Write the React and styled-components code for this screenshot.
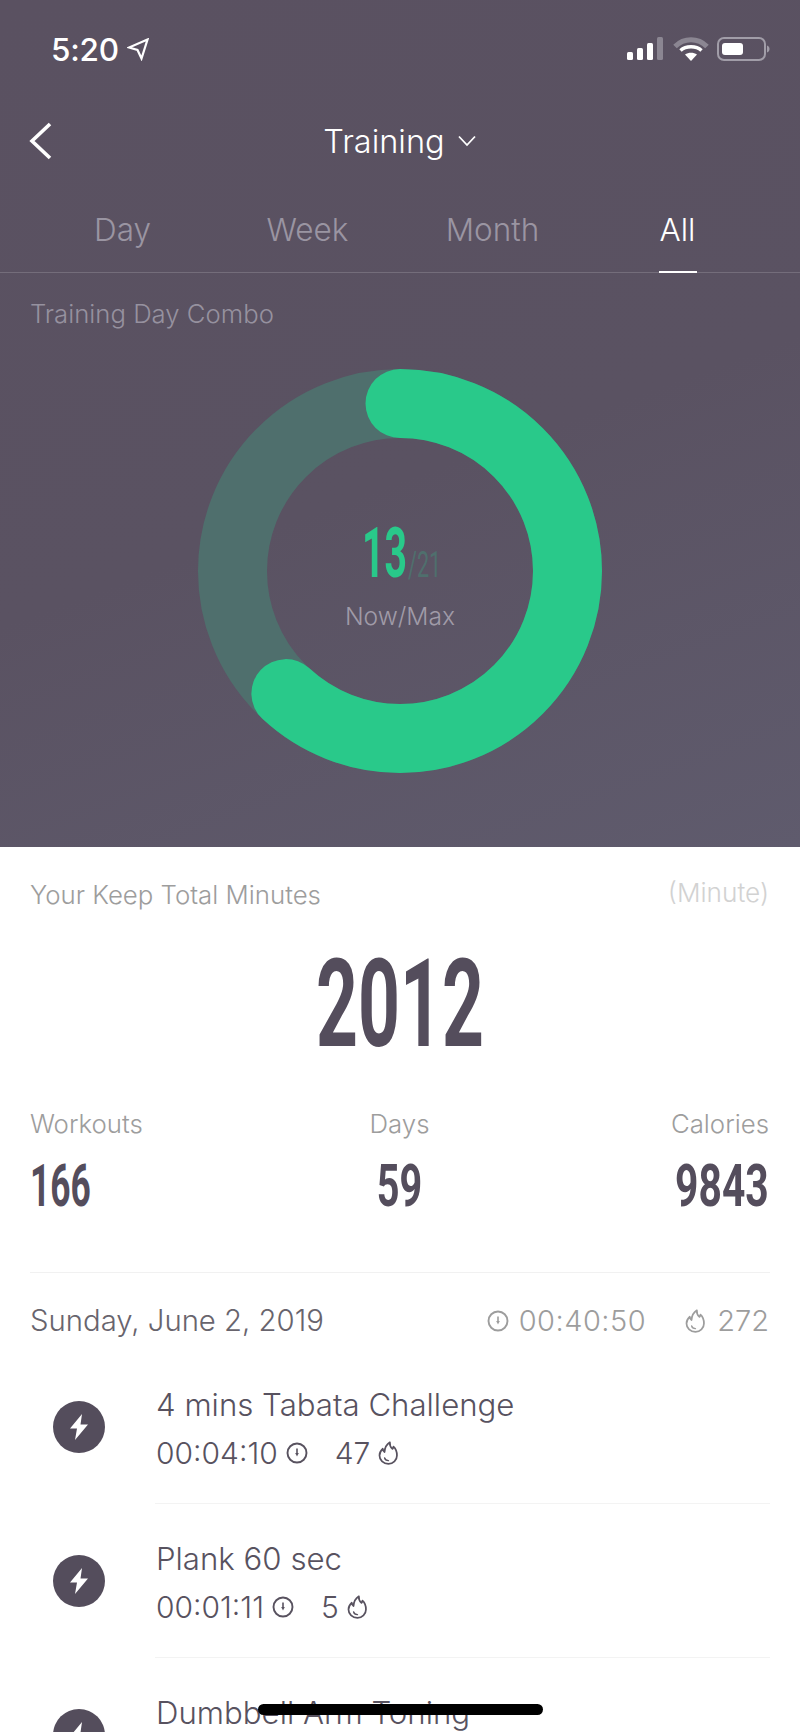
import styled, { createGlobalStyle } from "styled-components";

const GlobalStyle = createGlobalStyle`
  html, body {
    margin: 0;
    padding: 0;
    background: #fff;
  }
  * {
    box-sizing: border-box;
  }
`;

const Page = styled.div`
  position: relative;
  width: 800px;
  height: 1732px;
  overflow: hidden;
  font-family: Inter, "Liberation Sans", sans-serif;
  font-weight: 300;
  background: #fff;
`;

const Hero = styled.section`
  height: 847px;
  background: linear-gradient(160deg, #5a5161 0%, #5a5262 55%, #5f5b6d 100%);
  color: #fff;
`;

const StatusBar = styled.div`
  height: 98px;
  padding: 35px 30px 0 51px;
  display: flex;
  justify-content: space-between;
  align-items: flex-start;
`;

const StatusTime = styled.div`
  display: flex;
  align-items: center;
  gap: 8px;
  height: 28px;
  font-size: 31.5px;
  font-weight: 500;
  letter-spacing: -0.2px;
`;

const StatusIcons = styled.div`
  display: flex;
  align-items: center;
  height: 26px;
  margin-top: 2px;
`;

const TitleRow = styled.div`
  position: relative;
  height: 86px;
  display: flex;
  align-items: center;
  justify-content: center;
  gap: 13px;
  padding-right: 1px;
`;

const BackIcon = styled.svg`
  position: absolute;
  left: 29px;
  top: 24px;
`;

const Title = styled.h1`
  margin: 0;
  font-size: 32.5px;
  font-weight: 300;
`;

const Tabs = styled.nav`
  height: 89px;
  padding: 0 30px;
  display: grid;
  grid-template-columns: repeat(4, 185px);
  border-bottom: 1px solid rgba(255, 255, 255, 0.16);
`;

const Tab = styled.div`
  position: relative;
  display: flex;
  justify-content: center;
  padding-top: 27px;
  font-size: 31.5px;
  line-height: 38px;
  color: ${(props) => (props.$active ? "#fff" : "#9a95a2")};

  &::after {
    content: "";
    display: ${(props) => (props.$active ? "block" : "none")};
    position: absolute;
    left: 50%;
    bottom: -1px;
    width: 38px;
    height: 2px;
    margin-left: -19px;
    background: #fff;
  }
`;

const ComboLabel = styled.div`
  padding: 26px 0 0 30px;
  height: 96px;
  font-size: 25.7px;
  line-height: 30px;
  color: #96919f;
`;

const RingWrap = styled.div`
  position: relative;
  width: 404px;
  height: 404px;
  margin-left: 198px;
`;

const RingCenter = styled.div`
  position: absolute;
  top: 0;
  left: 0;
  right: 0;
  bottom: 0;
  display: flex;
  flex-direction: column;
  align-items: center;
  padding-top: 154px;
`;

const NowMax = styled.div`
  margin-top: 18px;
  font-size: 24.6px;
  line-height: 30px;
  color: #a09ba8;
`;

const Score = styled.div`
  display: flex;
  align-items: baseline;
  width: 76px;
  height: 60px;
`;

const Squeezed = styled.div`
  display: flex;
  justify-content: ${(props) => props.$justify || "flex-start"};
  width: ${(props) => props.$width}px;
  height: ${(props) => props.$height}px;
  line-height: ${(props) => props.$height}px;
  font-family: Roboto, "Liberation Sans", sans-serif;
  font-size: ${(props) => props.$size}px;
  font-weight: ${(props) => props.$weight || 700};
  color: ${(props) => props.$color || "#544d5c"};
  white-space: nowrap;

  span {
    display: block;
    transform: scaleX(${(props) => props.$scale});
    transform-origin: ${(props) => props.$origin || "left"} center;
  }
`;

const Summary = styled.section`
  padding: 0 30px;
`;

const SummaryHead = styled.div`
  display: flex;
  justify-content: space-between;
  align-items: flex-start;
  height: 96px;
  padding: 33px 1px 0 0;
`;

const SummaryLabel = styled.div`
  font-size: 25.8px;
  line-height: 30px;
  color: #9d9d9d;
`;

const SummaryUnit = styled.div`
  font-size: 26.2px;
  line-height: 30px;
  color: #d2d2d2;
  margin-top: -2px;
`;

const TotalRow = styled.div`
  display: flex;
  justify-content: center;
  height: 158px;
  padding-top: 7px;
`;

const Stats = styled.div`
  display: grid;
  grid-template-columns: 1fr 1fr 1fr;
  height: 172px;
  padding: 8px 1px 0 0;
  border-bottom: 1px solid #f1f1f1;
`;

const Stat = styled.div`
  display: flex;
  flex-direction: column;
  align-items: ${(props) => props.$align};
  font-size: 25.8px;
  line-height: 30px;
  color: #9d9d9d;
  gap: 22px;
`;

const DayHead = styled.div`
  display: flex;
  align-items: flex-start;
  height: 77px;
  padding: 30px 1px 0 0;
  line-height: 36px;
`;

const DayTitle = styled.div`
  flex: 1;
  font-size: 29.3px;
  color: #68646d;
`;

const DayFigure = styled.div`
  display: flex;
  align-items: center;
  gap: 10px;
  margin-left: 39px;
  font-size: 29px;
  letter-spacing: ${(props) => props.$tracking || 0}px;
  color: #9d9d9d;
`;

const Item = styled.div`
  display: flex;
  height: 154px;
`;

const Badge = styled.div`
  flex: none;
  width: 52px;
  height: 52px;
  margin: 51px 50px 0 23px;
  border-radius: 50%;
  background: #544d5c;
  display: flex;
  align-items: center;
  justify-content: center;
`;

const ItemBody = styled.div`
  flex: 1;
  padding-top: 37px;
  border-bottom: 1px solid #f3f3f3;
`;

const ItemTitle = styled.div`
  font-size: 31.2px;
  line-height: 36px;
  color: #58525f;
  margin-left: 1px;
`;

const ItemMeta = styled.div`
  display: flex;
  align-items: center;
  margin: 12px 0 0 1px;
  font-size: 30px;
  line-height: 36px;
  color: #58525f;
`;

const MetaValue = styled.span`
  margin-right: 8px;
`;

const MetaGroup = styled.span`
  display: flex;
  align-items: center;
  margin-right: 27px;
`;

const HomeBar = styled.div`
  position: absolute;
  left: 258px;
  top: 1704px;
  width: 285px;
  height: 11px;
  border-radius: 6px;
  background: #000;
`;

function ClockIcon({ size = 22, color }) {
  return (
    <svg width={size} height={size} viewBox="0 0 22 22" fill="none" stroke={color} strokeWidth="1.9">
      <circle cx="11" cy="11" r="9.5" />
      <path d="M11 6.5v5" strokeWidth="1.6" />
      <path d="M9.2 11h3.6L11 14.5z" fill={color} stroke="none" />
    </svg>
  );
}

function FlameIcon({ color }) {
  return (
    <svg width="22" height="24" viewBox="1.5 0 20 22" fill="none" stroke={color} strokeWidth="1.6" strokeLinejoin="round" strokeLinecap="round">
      <path d="M11 21c-4.700 0-8.200-3.400-8.200-7.700 0-2.800 1.300-4.700 3-6.200.1 1.300.6 2.300 1.600 3C7.600 6.500 9 3.300 12.300 1.200c-.4 2.700.9 4.600 2.400 6 .5-.6.8-1.200.9-2 1.900 1.700 3.200 4.800 3.200 8.100 0 4.300-3.500 7.700-7.800 7.700z" />
      <path d="M7.500 15.500c.3 1.500 1.500 2.500 3.500 2.500" strokeWidth="1.3" />
    </svg>
  );
}

function BoltIcon() {
  return (
    <svg width="20" height="28" viewBox="0 0 20 28" fill="#fff">
      <path d="M13 1 1 15.500h7L6 27l13-15.500h-7.500z" />
    </svg>
  );
}

function ProgressRing({ value, max }) {
  const radius = 167.5;
  const center = 202;
  const length = 2 * Math.PI * radius;
  return (
    <svg width="404" height="404" viewBox="0 0 404 404" fill="none" strokeWidth="69">
      <circle cx={center} cy={center} r={radius} stroke="#4f6f6d" />
      <circle
        cx={center}
        cy={center}
        r={radius}
        stroke="#29c98a"
        strokeLinecap="round"
        strokeDasharray={`${(length * value) / max} ${length}`}
        transform={`rotate(-90 ${center} ${center})`}
      />
    </svg>
  );
}

const workouts = [
  { name: "4 mins Tabata Challenge", time: "00:04:10", kcal: "47" },
  { name: "Plank 60 sec", time: "00:01:11", kcal: "5" },
  { name: "Dumbbell Arm Toning", time: "00:12:30", kcal: "64" },
];

export default function App() {
  return (
    <Page>
      <GlobalStyle />
      <Hero>
        <StatusBar>
          <StatusTime>
            5:20
            <svg width="22" height="24" viewBox="0 0 22 24" fill="none" stroke="#fff" strokeWidth="2.2" strokeLinejoin="miter">
              <path d="M20.500 2.500 2 10.500l8.500 2.500 4 8.500z" />
            </svg>
          </StatusTime>
          <StatusIcons>
            <svg width="143" height="26" viewBox="0 0 143 26" fill="none">
              <rect x="0" y="15" width="6" height="8" rx="1.500" fill="#fff" />
              <rect x="10" y="11" width="6" height="12" rx="1.500" fill="#fff" />
              <rect x="20" y="6" width="6" height="17" rx="1.500" fill="#fff" />
              <rect x="30" y="0" width="6" height="23" rx="1.500" fill="#8b8692" />
              <path d="M48 9.500c9-9 23-9 32 0" stroke="#8b8692" strokeWidth="5" />
              <path d="M53.500 13.500c5.500-5 15.500-5 21 0" stroke="#fff" strokeWidth="3.500" />
              <path d="M58 17.500c3.500-2.500 8.500-2.500 12 0L64 24z" fill="#fff" />
              <rect x="91" y="1" width="47" height="22" rx="6" stroke="#a19da8" strokeWidth="2" />
              <rect x="95" y="6" width="21" height="12" rx="3" fill="#fff" />
              <path d="M140 8.500c1.500.5 2.500 1.800 2.500 3.500s-1 3-2.500 3.500z" fill="#a19da8" />
            </svg>
          </StatusIcons>
        </StatusBar>
        <TitleRow>
          <BackIcon width="24" height="38" viewBox="0 0 24 38" fill="none" stroke="#fff" strokeWidth="3.600">
            <path d="M21 2 3 19l18 17" />
          </BackIcon>
          <Title>Training</Title>
          <svg width="18" height="12" viewBox="0 0 18 12" fill="none" stroke="#fff" strokeWidth="1.800">
            <path d="M1 1.500 9 10l8-8.500" />
          </svg>
        </TitleRow>
        <Tabs>
          <Tab>Day</Tab>
          <Tab>Week</Tab>
          <Tab>Month</Tab>
          <Tab $active>All</Tab>
        </Tabs>
        <ComboLabel>Training Day Combo</ComboLabel>
        <RingWrap>
          <ProgressRing value={13} max={21} />
          <RingCenter>
            <Score>
              <Squeezed $width={46} $height={60} $size={70} $scale={0.56} $color="#29c98a">
                <span>13</span>
              </Squeezed>
              <Squeezed $width={30} $height={60} $size={36} $scale={0.6} $weight={400} $color="#4f6f6d">
                <span>/21</span>
              </Squeezed>
            </Score>
            <NowMax>Now/Max</NowMax>
          </RingCenter>
        </RingWrap>
      </Hero>
      <Summary>
        <SummaryHead>
          <SummaryLabel>Your Keep Total Minutes</SummaryLabel>
          <SummaryUnit>(Minute)</SummaryUnit>
        </SummaryHead>
        <TotalRow>
          <Squeezed $width={166} $height={110} $size={122} $scale={0.6} $justify="center" $origin="center">
            <span>2012</span>
          </Squeezed>
        </TotalRow>
        <Stats>
          <Stat $align="flex-start">
            Workouts
            <Squeezed $width={64} $height={50} $size={60} $scale={0.59}>
              <span>166</span>
            </Squeezed>
          </Stat>
          <Stat $align="center">
            Days
            <Squeezed $width={46} $height={50} $size={60} $scale={0.66} $justify="center" $origin="center">
              <span>59</span>
            </Squeezed>
          </Stat>
          <Stat $align="flex-end">
            Calories
            <Squeezed $width={94} $height={50} $size={60} $scale={0.68} $justify="flex-end" $origin="right">
              <span>9843</span>
            </Squeezed>
          </Stat>
        </Stats>
        <DayHead>
          <DayTitle>Sunday, June 2, 2019</DayTitle>
          <DayFigure $tracking={0.5}>
            <ClockIcon color="#9d9d9d" />
            00:40:50
          </DayFigure>
          <DayFigure>
            <FlameIcon color="#9d9d9d" />
            272
          </DayFigure>
        </DayHead>
        {workouts.map((item) => (
          <Item key={item.name}>
            <Badge>
              <BoltIcon />
            </Badge>
            <ItemBody>
              <ItemTitle>{item.name}</ItemTitle>
              <ItemMeta>
                <MetaGroup>
                  <MetaValue>{item.time}</MetaValue>
                  <ClockIcon color="#58525f" />
                </MetaGroup>
                <MetaGroup>
                  <MetaValue>{item.kcal}</MetaValue>
                  <FlameIcon color="#58525f" />
                </MetaGroup>
              </ItemMeta>
            </ItemBody>
          </Item>
        ))}
      </Summary>
      <HomeBar />
    </Page>
  );
}
